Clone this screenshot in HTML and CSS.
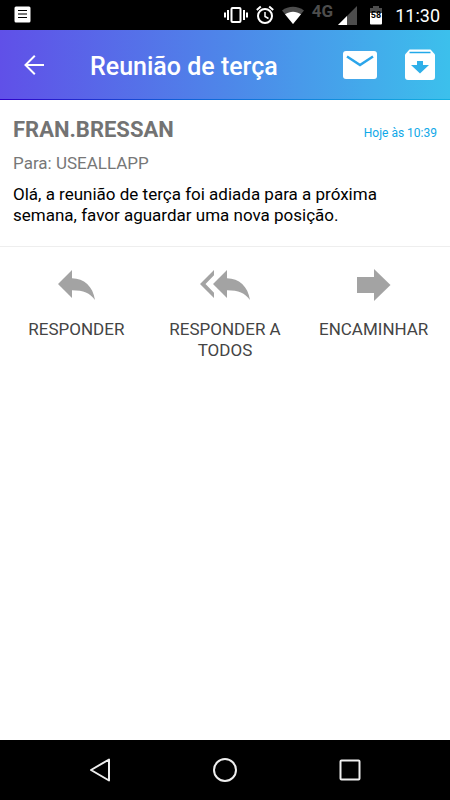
FILE: index.html
```html
<!DOCTYPE html>
<html lang="pt-BR">
  <head>
    <meta charset="UTF-8" />
    <meta name="viewport" content="width=device-width, initial-scale=1.0" />
    <title>Reunião de terça</title>
    <link rel="stylesheet" href="styles.css">
  </head>
  <body>
    <div class="status-bar">
      <svg class="status-note" width="18" height="18" viewBox="0 0 18 18">
        <rect x="0.5" y="0.5" width="16" height="16" rx="1.5" fill="#fff" />
        <path d="M4 4.5h9M4 11.5h9" stroke="#000" />
        <path d="M4 8h9" stroke="#777" stroke-width="2" />
      </svg>
      <div class="status-icons">
        <svg width="24" height="20" viewBox="0 0 24 20" fill="none" stroke="#fff">
          <rect x="7.5" y="3" width="9" height="14" rx="1" stroke-width="2" />
          <path d="M4 5v10M20 5v10" stroke-width="2" />
          <path d="M1 7.500v5M23 7.500v5" stroke-width="2" />
        </svg>
        <svg width="18" height="20" viewBox="0 0 18 20" fill="none" stroke="#fff">
          <circle cx="9" cy="11" r="7" stroke-width="2" />
          <path d="M9 7v4.500l3.500 2" stroke-width="1.500" />
          <path d="M0.800 5l4-3.500M17.200 5l-4-3.500" stroke-width="2" />
        </svg>
        <svg width="22" height="20" viewBox="0 0 22 20">
          <path d="M0 5.500C6.500 0.600 15.500 0.600 22 5.500L11 19z" fill="#4d4d4d" />
          <path d="M3 9.200C8 5.800 14 5.800 19 9.200L11 19z" fill="#fff" />
        </svg>
        <span class="network">4G</span>
        <svg width="19" height="20" viewBox="0 0 19 20">
          <path d="M0 20L19 1v19z" fill="#4d4d4d" />
          <path d="M0 20L9 11v9z" fill="#fff" />
        </svg>
        <svg class="battery" width="12" height="20" viewBox="0 0 12 20">
          <path d="M0 3h3V1h6v2h3v6H0z" fill="#4d4d4d" />
          <path d="M0 8h12v10.500q0 1-1 1H1q-1 0-1-1z" fill="#fff" />
          <text x="6" y="13" text-anchor="middle">58</text>
        </svg>
        <span class="clock">11:30</span>
      </div>
    </div>

    <header class="toolbar">
      <button class="icon-button" aria-label="Voltar">
        <svg width="20" height="20" viewBox="0 0 20 20" fill="none" stroke="#fff" stroke-width="2">
          <path d="M20 10H1.500M10.800 0.800L1.500 10l9.300 9.200" />
        </svg>
      </button>
      <h1>Reunião de terça</h1>
      <button class="icon-button" aria-label="Marcar como não lida">
        <svg width="34" height="28" viewBox="0 0 34 28">
          <rect width="34" height="28" rx="3" fill="#fff" />
          <path d="M4 5.500L17 14l13-8.500" fill="none" stroke="#2ba5ea" stroke-width="2.500" />
        </svg>
      </button>
      <button class="icon-button" aria-label="Arquivar">
        <svg width="30" height="32" viewBox="0 0 30 32">
          <path d="M4.500 0.500h21l4.500 5V28q0 3-3 3H3q-3 0-3-3V5.500z" fill="#fff" />
          <path d="M4.500 3.500h21" stroke="#22a9e9" stroke-width="1.500" />
          <path d="M12 12h6v4h6l-9 8.500L6 16h6z" fill="#2fb0e9" />
        </svg>
      </button>
    </header>

    <main>
      <article class="message">
        <div class="message-head">
          <h2>FRAN.BRESSAN</h2>
          <time>Hoje às 10:39</time>
        </div>
        <p class="recipient">Para: USEALLAPP</p>
        <p class="content">Olá, a reunião de terça foi adiada para a próxima semana, favor aguardar uma nova posição.</p>
      </article>

      <div class="actions">
        <button>
          <svg width="38" height="32" viewBox="0 0 38 32">
            <path d="M1 15L15 1v8.300C27 9.300 36 17.500 38 31 32.500 24 27 21.300 15 21.300V29z" />
          </svg>
          RESPONDER
        </button>
        <button>
          <svg width="50" height="32" viewBox="0 0 50 32">
            <path d="M0 15L14 1v5.200L5.500 15l8.500 8.800V29z" />
            <path d="M13 15L27 1v8.300C39 9.300 48 17.500 50 31 44.500 24 39 21.300 27 21.300V29z" />
          </svg>
          RESPONDER A TODOS
        </button>
        <button>
          <svg width="34" height="32" viewBox="0 0 34 32">
            <path d="M0 8h17V0l16.500 16L17 32v-8H0z" />
          </svg>
          ENCAMINHAR
        </button>
      </div>
    </main>

    <nav class="nav-bar">
      <button aria-label="Voltar">
        <svg width="26" height="26" viewBox="0 0 26 26">
          <path d="M4 13L22 2.500v21z" />
        </svg>
      </button>
      <button aria-label="Início">
        <svg width="26" height="26" viewBox="0 0 26 26">
          <circle cx="13" cy="13" r="11" />
        </svg>
      </button>
      <button aria-label="Recentes">
        <svg width="26" height="26" viewBox="0 0 26 26">
          <rect x="3.500" y="3.500" width="19" height="19" rx="1" />
        </svg>
      </button>
    </nav>
  </body>
</html>
```
FILE: styles.css
```css
* {
  box-sizing: border-box;
}

body {
  margin: 0;
  min-height: 100vh;
  display: flex;
  flex-direction: column;
  background: #fff;
  color: #000;
  font-family: Roboto, sans-serif;
  font-size: 17px;
  line-height: 21px;
}

h1,
h2,
p {
  margin: 0;
}

svg {
  display: block;
  flex-shrink: 0;
}

button {
  margin: 0;
  padding: 0;
  border: none;
  background: none;
  font: inherit;
  color: inherit;
  cursor: pointer;
}

/* status bar */
.status-bar {
  height: 30px;
  padding: 0 10px 0 14px;
  display: flex;
  align-items: center;
  justify-content: space-between;
  background: #000;
  color: #fff;
}

.status-icons {
  display: flex;
  align-items: center;
  gap: 8px;
}

.network {
  align-self: flex-start;
  margin: -4px -3px 0 0;
  color: #4d4d4d;
  font-weight: 700;
}

.battery {
  margin: 0 5px;
}

.battery text {
  font-size: 9px;
  font-weight: 700;
}

.clock {
  font-size: 18px;
}

/* toolbar */
.toolbar {
  height: 70px;
  padding: 0 15px 0 24px;
  display: flex;
  align-items: center;
  gap: 28px;
  background: linear-gradient(to right, #6050e8, #4e86e9 50%, #3cc0ec);
  border-bottom: 1px solid;
  border-image: linear-gradient(to right, #3000c8, #1060d8 40%, #12b0e0) 1;
  color: #fff;
}

.toolbar h1 {
  flex: 1;
  padding: 4px 0 0 18px;
  font-size: 25px;
  font-weight: 500;
  line-height: 30px;
}

/* message */
main {
  flex: 1;
}

.message {
  padding: 15px 13px 20px;
  border-bottom: 1px solid #eee;
}

.message-head {
  display: flex;
  align-items: center;
  justify-content: space-between;
}

.message-head h2 {
  color: #737373;
  font-size: 22px;
  font-weight: 700;
  line-height: 24px;
}

.message-head time {
  padding-top: 8px;
  color: #10a8e8;
  font-size: 12px;
}

.recipient {
  margin: 9px 0 10px;
  color: #777;
}

/* actions */
.actions {
  padding: 22px 2px;
  display: grid;
  grid-template-columns: repeat(3, 1fr);
}

.actions button {
  padding: 0 16px;
  display: flex;
  flex-direction: column;
  align-items: center;
  gap: 18px;
  color: #444;
}

.actions svg {
  fill: #a3a3a3;
}

/* navigation bar */
.nav-bar {
  height: 60px;
  padding: 0 37px;
  display: grid;
  grid-template-columns: repeat(3, 1fr);
  background: #000;
}

.nav-bar button {
  display: flex;
  align-items: center;
  justify-content: center;
}

.nav-bar svg {
  fill: none;
  stroke: #eee;
  stroke-width: 2;
  stroke-linejoin: round;
}
```
